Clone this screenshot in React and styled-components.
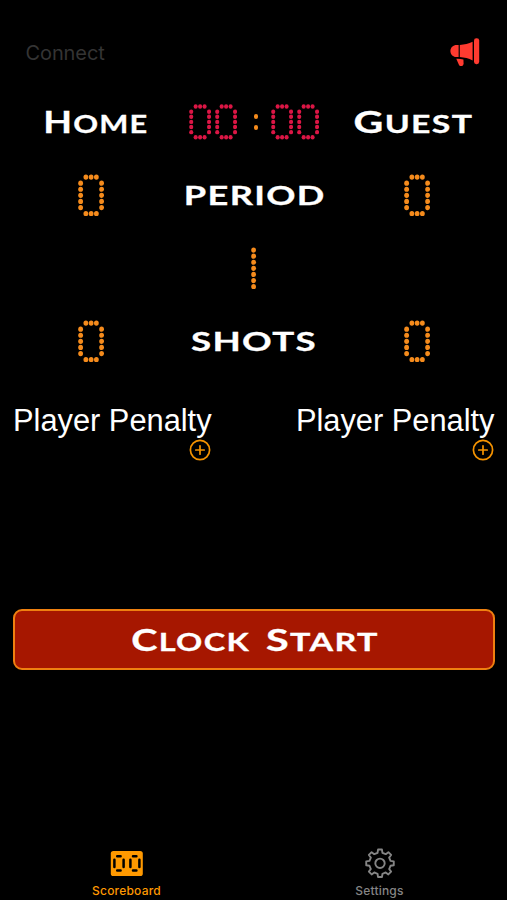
import styled, { createGlobalStyle, ThemeProvider } from "styled-components";

const GlobalStyled = createGlobalStyle`
  * {
    box-sizing: border-box;
  }

  body {
    margin: 0;
    background-color: ${({ theme }) => theme.backgroundColor};
    color: ${({ theme }) => theme.color};
    font-family: "Liberation Sans", Arial, sans-serif;
  }
`;

const Screen = styled.div`
  width: 507px;
  height: 900px;
  overflow: hidden;
  display: flex;
  flex-direction: column;
`;

const Header = styled.header`
  height: 88px;
  padding: 38px 27px 0 25.5px;
  display: flex;
  justify-content: space-between;
  align-items: flex-start;
`;

const ConnectButton = styled.button`
  padding: 0;
  border: none;
  background: none;
  color: ${({ theme }) => theme.disabled};
  font-family: Inter, sans-serif;
  font-size: 20px;
  line-height: 30px;
  letter-spacing: -0.1px;
`;

const HornButton = styled.button`
  display: block;
  padding: 0;
  border: none;
  background: none;
  line-height: 0;
`;

const Board = styled.main`
  flex: 1;
  display: flex;
  flex-direction: column;
`;

const Row = styled.div`
  height: ${({ $height }) => $height}px;
  padding-left: 1px;
  display: grid;
  grid-template-columns: repeat(3, ${({ $column }) => $column}px);
  justify-content: center;
  align-items: center;
  justify-items: center;
`;

const Title = styled.span`
  display: inline-block;
  font-family: Lato, sans-serif;
  font-weight: 700;
  font-size: ${({ $size }) => $size || 25}px;
  line-height: 36px;
  letter-spacing: ${({ $spacing }) => $spacing || 1}px;
  margin-right: -${({ $spacing }) => $spacing || 1}px;
  text-transform: uppercase;
  white-space: nowrap;
  -webkit-text-stroke: 0.3px #ffffff;
  transform: scaleX(${({ $stretch }) => $stretch || 1.3});

  &::first-letter {
    font-size: ${({ $initial, $size }) => $initial || $size || 25}px;
  }
`;

const DigitImage = styled.svg`
  display: block;
  fill: ${({ theme, $small }) => ($small ? theme.clock : theme.led)};
`;

const Clock = styled.div`
  display: flex;
  align-items: center;
`;

const Pair = styled.div`
  display: flex;
  gap: 3.6px;
`;

const Colon = styled.div`
  width: 33.4px;
  padding-left: 4px;
  display: flex;
  flex-direction: column;
  align-items: center;
  gap: 6.6px;

  & i {
    width: 4.6px;
    height: 4.8px;
    border-radius: 50%;
    background-color: ${({ theme }) => theme.led};
  }
`;

const Penalties = styled.div`
  display: flex;
  justify-content: space-between;
  padding: 0 12.5px 0 13px;
  margin-top: 24px;
`;

const Penalty = styled.section`
  display: flex;
  flex-direction: column;
  align-items: flex-end;
  font-size: 30.8px;
  line-height: 34px;
`;

const AddButton = styled.button`
  display: block;
  margin-top: 1px;
  padding: 0 1px 0 0;
  border: none;
  background: none;
  line-height: 0;
`;

const StartButton = styled.button`
  display: flex;
  justify-content: center;
  align-items: center;
  gap: 45px;
  height: 61px;
  margin: 148px 12px 0 13px;
  padding: 0;
  border: 2px solid #ef8010;
  border-radius: 9px;
  background-color: #a61700;
  color: #ffffff;
`;

const TabBar = styled.nav`
  height: 54px;
  display: grid;
  grid-template-columns: repeat(2, 253px);
`;

const Tab = styled.a`
  display: flex;
  flex-direction: column;
  align-items: center;
  color: ${({ theme, $active }) => ($active ? theme.accent : theme.muted)};
  font-family: Inter, sans-serif;
  font-size: 12px;
  font-weight: 500;
  line-height: 16px;
  letter-spacing: 0.2px;

  & svg {
    height: 34px;
    margin-bottom: 3px;
  }
`;

const PATTERNS = {
  0: [".###.", "#...#", "#...#", "#...#", "#...#", "#...#", ".###."],
  1: ["#", "#", "#", "#", "#", "#", "#"],
};

function DotDigit({ value, small }) {
  const rows = PATTERNS[value];
  const cols = rows[0].length;
  const stepX = small ? 4.45 : 5.25;
  const stepY = small ? 5.12 : 6.1;
  return (
    <DigitImage
      role="img"
      aria-label={String(value)}
      width={cols * stepX}
      height={rows.length * stepY}
      $small={small}
    >
      {rows.map((row, y) =>
        row.split("").map((cell, x) =>
          cell === "#" ? (
            <ellipse
              key={`${x}-${y}`}
              cx={(x + 0.5) * stepX}
              cy={(y + 0.5) * stepY}
              rx={small ? 2.05 : 2.4}
              ry={small ? 2.2 : 2.6}
            />
          ) : null
        )
      )}
    </DigitImage>
  );
}

function HornIcon() {
  return (
    <svg width="30" height="29" viewBox="0 0 30 29" fill="#ff3b30">
      <path d="M8.6 6.9H6.8C3 6.9.4 9.4.4 13s2.6 6.1 6.4 6.1h1.8z" />
      <path d="M9.8 6.9c4.5-.2 9-1.2 12.8-3.1v18.7c-3.8-1.9-8.3-3.1-12.8-3.4z" />
      <rect x="24" y="0.2" width="5.2" height="26" rx="2.4" />
      <path d="M6.3 20.7c2.4-.1 4.8.1 7.1.8l.2 3.9c.1 2.7-3.2 3.7-4.6 1.5z" />
    </svg>
  );
}

function PlusIcon() {
  return (
    <svg width="22" height="22" viewBox="0 0 22 22" fill="none" stroke="#f59300" strokeWidth="1.7" strokeLinecap="round">
      <circle cx="11" cy="11" r="9.6" />
      <path d="M11 6.8v8.4M6.8 11h8.4" />
    </svg>
  );
}

function ScoreboardIcon() {
  return (
    <svg width="33" height="34" viewBox="0 0 33 34">
      <rect x="0.8" y="5" width="32" height="25" rx="2.6" fill="currentColor" />
      <g stroke="#000000" strokeWidth="2.5" strokeLinecap="round">
        <path d="M7.2 10.2h3.4M7.2 24.6h3.4M23 10.2h3.4M23 24.6h3.4" />
        <path d="M4.4 13.8v7.2M13.6 13.8v7.2M20.4 13.8v7.2M29.4 13.8v7.2" />
      </g>
    </svg>
  );
}

// Outline of an eight-toothed gear around the origin
function gearPath(teeth, inner, outer) {
  const step = (Math.PI * 2) / teeth;
  const points = [];
  for (let i = 0; i < teeth; i++) {
    const a = i * step - Math.PI / 2;
    [[-0.29, inner], [-0.18, outer], [0.18, outer], [0.29, inner]].forEach(([t, r]) => {
      points.push(`${(Math.cos(a + t * step) * r).toFixed(2)} ${(Math.sin(a + t * step) * r).toFixed(2)}`);
    });
  }
  return `M${points.join("L")}Z`;
}

function GearIcon() {
  return (
    <svg width="34" height="34" viewBox="-17 -17.3 34 34" fill="none" stroke="currentColor" strokeWidth="1.9" strokeLinejoin="round">
      <path d={gearPath(8, 10.8, 13.9)} />
      <circle r="4.7" />
    </svg>
  );
}

const THEME = {
  backgroundColor: "#000000",
  color: "#ffffff",
  disabled: "#343434",
  muted: "#858585",
  led: "#f58b1c",
  clock: "#dc1645",
  accent: "#ff9900",
};

function App() {
  return (
    <ThemeProvider theme={THEME}>
      <GlobalStyled />
      <Screen>
        <Header>
          <ConnectButton>Connect</ConnectButton>
          <HornButton aria-label="Horn">
            <HornIcon />
          </HornButton>
        </Header>
        <Board>
          <Row $height={68} $column={159}>
            <Title $initial={30.4} $stretch={1.23}>Home</Title>
            <Clock>
              <Pair>
                <DotDigit value={0} small />
                <DotDigit value={0} small />
              </Pair>
              <Colon>
                <i />
                <i />
              </Colon>
              <Pair>
                <DotDigit value={0} small />
                <DotDigit value={0} small />
              </Pair>
            </Clock>
            <Title $initial={30.4} $stretch={1.35}>Guest</Title>
          </Row>
          <Row $height={78} $column={163}>
            <DotDigit value={0} />
            <Title $size={27.4} $stretch={1.32}>Period</Title>
            <DotDigit value={0} />
          </Row>
          <Row $height={68} $column={163}>
            <span />
            <DotDigit value={1} />
            <span />
          </Row>
          <Row $height={78} $column={163}>
            <DotDigit value={0} />
            <Title $size={27.4} $stretch={1.34}>Shots</Title>
            <DotDigit value={0} />
          </Row>
          <Penalties>
            <Penalty>
              Player Penalty
              <AddButton aria-label="Add home penalty">
                <PlusIcon />
              </AddButton>
            </Penalty>
            <Penalty>
              Player Penalty
              <AddButton aria-label="Add guest penalty">
                <PlusIcon />
              </AddButton>
            </Penalty>
          </Penalties>
          <StartButton>
            <Title $initial={30.4}>Clock</Title>
            <Title $initial={30.4} $stretch={1.36}>Start</Title>
          </StartButton>
        </Board>
        <TabBar>
          <Tab $active>
            <ScoreboardIcon />
            Scoreboard
          </Tab>
          <Tab>
            <GearIcon />
            Settings
          </Tab>
        </TabBar>
      </Screen>
    </ThemeProvider>
  );
}

export default App;
